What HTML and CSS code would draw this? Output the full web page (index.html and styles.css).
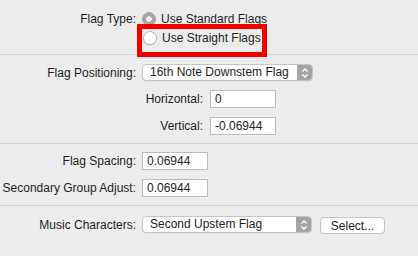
FILE: index.html
```html
<!DOCTYPE html>
<html>
  <head>
    <meta charset="UTF-8" />
    <title>Flag Options</title>
    <link rel="stylesheet" href="styles.css">
  </head>
  <body>
    <div class="section section-type">
      <div class="row">
        <span class="label">Flag Type:</span>
        <label class="option">
          <span class="radio radio-on"></span>
          <span>Use Standard Flags</span>
        </label>
      </div>
      <div class="row row-second">
        <span class="label"></span>
        <label class="option option-marked">
          <span class="radio"></span>
          <span>Use Straight Flags</span>
        </label>
      </div>
    </div>

    <div class="section section-pos">
      <div class="row">
        <span class="label">Flag Positioning:</span>
        <div class="popup popup-pos">
          <span class="popup-text">16th Note Downstem Flag</span>
          <span class="stepper">
            <svg width="8" height="12" viewBox="0 0 8 12">
              <path d="M1.5 4.5 L4 2 L6.5 4.5 M1.5 7.5 L4 10 L6.5 7.5" fill="none" stroke="#fff" stroke-width="1.4" />
            </svg>
          </span>
        </div>
      </div>
      <div class="row row-sub">
        <span class="label"></span>
        <div class="sub">
          <span class="sub-label">Horizontal:</span>
          <input class="field" type="text" value="0" />
        </div>
      </div>
      <div class="row row-sub">
        <span class="label"></span>
        <div class="sub">
          <span class="sub-label">Vertical:</span>
          <input class="field" type="text" value="-0.06944" />
        </div>
      </div>
    </div>

    <div class="section section-spacing">
      <div class="row">
        <span class="label">Flag Spacing:</span>
        <input class="field" type="text" value="0.06944" />
      </div>
      <div class="row row-gap">
        <span class="label">Secondary Group Adjust:</span>
        <input class="field" type="text" value="0.06944" />
      </div>
    </div>

    <div class="section section-music">
      <div class="row">
        <span class="label">Music Characters:</span>
        <div class="controls">
          <div class="popup popup-music">
            <span class="popup-text">Second Upstem Flag</span>
            <span class="stepper">
              <svg width="8" height="12" viewBox="0 0 8 12">
                <path d="M1.5 4.5 L4 2 L6.5 4.5 M1.5 7.5 L4 10 L6.5 7.5" fill="none" stroke="#fff" stroke-width="1.4" />
              </svg>
            </span>
          </div>
          <button class="button" type="button">Select...</button>
        </div>
      </div>
    </div>
  </body>
</html>
```

FILE: styles.css
```css
body {
  margin: 0;
  background-color: #ececec;
  font-family: "Liberation Sans", Arial, sans-serif;
  font-size: 12px;
  color: #1e1e1e;
}

.section {
  border-bottom: 1px solid #d3d3d3;
}

.section-type {
  padding: 12px 0 2px;
}

.section-pos {
  padding: 9px 0 8px;
}

.section-spacing {
  padding: 8px 0 8px;
}

.section-music {
  padding: 9px 0 0;
  border-bottom: none;
}

.row {
  display: grid;
  grid-template-columns: 136px auto;
  column-gap: 6px;
  align-items: center;
  justify-content: start;
}

.label {
  text-align: right;
  white-space: nowrap;
}

.row-second {
  margin-top: 3px;
}

.row-sub {
  margin-top: 9px;
}

.row-gap {
  margin-top: 9px;
}

/* radio buttons */
.option {
  display: flex;
  align-items: center;
  gap: 5px;
  height: 14px;
  line-height: 14px;
  white-space: nowrap;
}

.option-marked {
  height: 23px;
  width: 120px;
  padding-left: 1px;
  box-sizing: border-box;
  align-items: flex-start;
  padding-top: 2px;
  outline: 5px solid #f20000;
}

.radio {
  display: inline-block;
  width: 14px;
  height: 14px;
  box-sizing: border-box;
  border-radius: 50%;
  border: 1px solid #b4b4b4;
  background-color: #fff;
  box-shadow: 0 1px 1px rgba(0, 0, 0, 0.08);
  flex-shrink: 0;
}

.radio-on {
  border-color: #a2a2a2;
  background: radial-gradient(circle, #fff 0, #fff 2.5px, #a6a6a6 3px);
}

/* popups */
.popup {
  display: flex;
  align-items: stretch;
  height: 17px;
  box-sizing: border-box;
  background-color: #fff;
  border: 1px solid #c4c4c4;
  border-radius: 4px;
  box-shadow: 0 1px 1px rgba(0, 0, 0, 0.06);
  overflow: hidden;
}

.popup-pos {
  width: 171px;
}

.popup-music {
  width: 170px;
}

.popup-text {
  flex: 1;
  padding-left: 7px;
  line-height: 15px;
  white-space: nowrap;
}

.stepper {
  width: 15px;
  background-color: #a4a4a4;
  display: flex;
  align-items: center;
  justify-content: center;
}

/* text fields */
.field {
  width: 66px;
  height: 18px;
  box-sizing: border-box;
  margin: 0;
  padding: 0 4px;
  border: 1px solid #bcbcbc;
  background-color: #fff;
  font-family: "Liberation Sans", Arial, sans-serif;
  font-size: 12px;
  color: #1e1e1e;
}

.sub {
  display: flex;
  align-items: center;
  gap: 7px;
}

.sub-label {
  width: 61px;
  text-align: right;
}

/* buttons */
.controls {
  display: flex;
  align-items: center;
  gap: 8px;
}

.button {
  width: 65px;
  height: 17px;
  margin-top: 2px;
  padding: 0;
  background-color: #fff;
  border: 1px solid #c4c4c4;
  border-radius: 4px;
  box-shadow: 0 1px 1px rgba(0, 0, 0, 0.06);
  font-family: "Liberation Sans", Arial, sans-serif;
  font-size: 12px;
  color: #1e1e1e;
}
```
